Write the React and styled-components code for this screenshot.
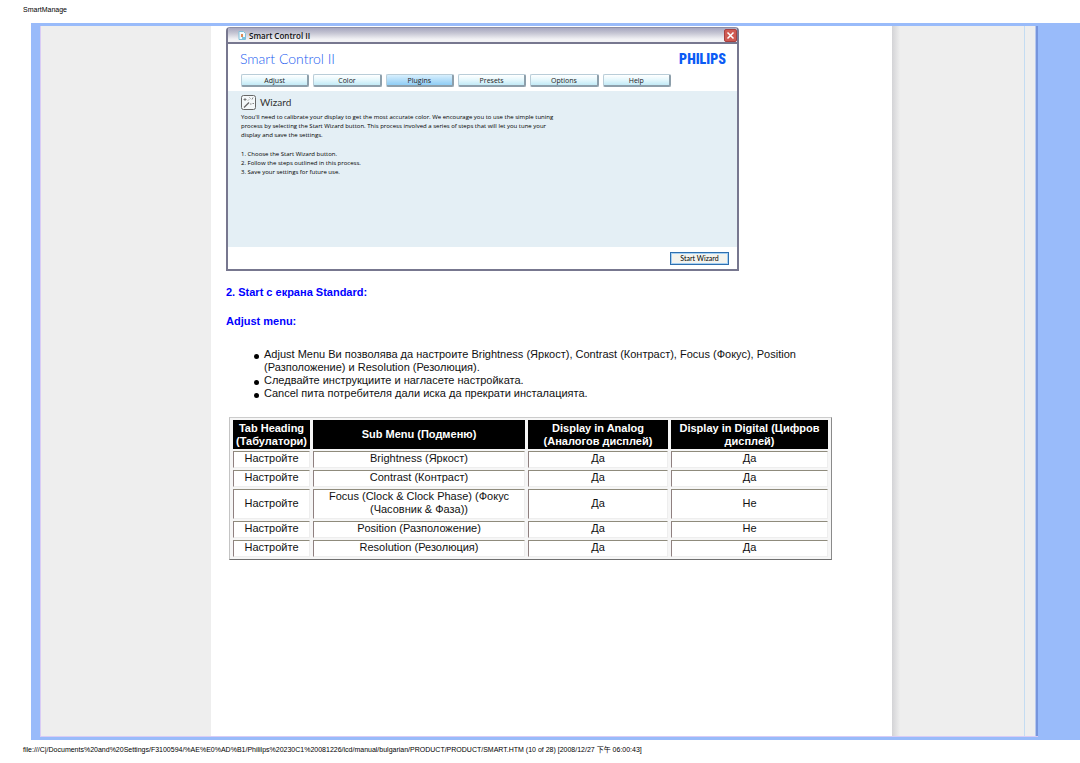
import React from "react";
import styled, { createGlobalStyle } from "styled-components";

const GlobalStyle = createGlobalStyle`
    body
    {
        margin: 0;
        background: #ffffff;
        color: #111111;
        font-family: "Liberation Sans", Arial, "Noto Sans CJK TC", sans-serif;
    }
`

const Page = styled.div`
    box-sizing: border-box;
    min-height: 100vh;
    display: flex;
    flex-direction: column;
`

const PrintLine = styled.div`
    box-sizing: border-box;
    height: 23px;
    padding: 4px 0 0 23px;
    font-size: 7px;
    line-height: 11px;
    white-space: nowrap;
    color: #000000;
`

const Frame = styled.div`
    box-sizing: border-box;
    flex: 1;
    display: flex;
    margin-left: 31px;
    border: solid #99bbfa;
    border-width: 3px 42px 3px 9px;
`

const Sheet = styled.div`
    flex: 1;
    display: flex;
    border: 1px solid #d9ccf5;
    border-width: 0 0 1px 1px;
`

const LeftMargin = styled.div`
    width: 170px;
    background: #eeeeee;
`

const RightMargin = styled.div`
    width: 132px;
    background: linear-gradient(to right, #d3d3d6 0px, #eeeeee 8px);
    border-right: 1px solid #c4dcf2;
`

const Edge = styled.div`
    width: 11px;
    background: #eeeeee;
    border-right: 2px solid #7795dc;
    box-shadow: inset -1px 0 0 #b7c8ee;
`

const Main = styled.main`
    flex: 1;
    box-sizing: border-box;
    padding: 1px 60px 0 15px;
`

const Window = styled.section`
    box-sizing: border-box;
    max-width: 513px;
    border: 2px solid #77778f;
    border-top: 1px solid #8e8ea4;
    border-radius: 4px 4px 0 0;
    background: #ffffff;
    overflow: hidden;
`

const TitleBar = styled.header`
    box-sizing: border-box;
    height: 16px;
    display: flex;
    align-items: center;
    gap: 3px;
    padding: 0 0 0 10px;
    background: linear-gradient(#a6a6bf, #c4c4d2 35%, #f2f2f5 80%);
    border-bottom: 2px solid #77778f;
    font-family: "Open Sans", sans-serif;
    font-size: 8px;
    font-weight: 600;
`

const CloseButton = styled.button`
    width: 13px;
    height: 13px;
    margin-left: auto;
    padding: 0;
    display: flex;
    align-items: center;
    justify-content: center;
    border: 1px solid #a84040;
    border-radius: 2px;
    background: #cf5a52;
`

const Brand = styled.div`
    display: flex;
    align-items: center;
    justify-content: space-between;
    height: 30px;
    padding: 0 11px 0 12px;
`

const AppName = styled.h1`
    margin: 0;
    font-family: Lato, sans-serif;
    font-size: 14px;
    font-weight: 300;
    line-height: 16px;
    color: #1a5cf0;
`

const Philips = styled.span`
    font-family: "Roboto Condensed", Roboto, sans-serif;
    font-size: 14px;
    font-weight: 900;
    line-height: 16px;
    color: #0b5bf5;
`

const Tabs = styled.nav`
    display: flex;
    gap: 4px;
    max-width: 430px;
    padding: 0 0 4px 13px;
`

const Tab = styled.button`
    flex: 1;
    height: 13px;
    padding: 0;
    border: 1px solid #b9cdd8;
    border-right: 2px solid #8d9fab;
    border-bottom: 2px solid #8d9fab;
    border-radius: 2px;
    background: ${({ $active }) => $active
        ? "linear-gradient(#d8effd, #8fcdf5)"
        : "linear-gradient(#ffffff, #e4f7fc 50%, #c2eaf6)"};
    color: #222222;
    font-family: "Open Sans", sans-serif;
    font-size: 7px;
    line-height: 11px;
`

const Wizard = styled.div`
    box-sizing: border-box;
    min-height: 156px;
    padding: 4px 13px;
    background: #e4eff5;
    font-family: "Open Sans", sans-serif;
    font-size: 6px;
    line-height: 9px;
    color: #000000;
`

const WizardTitle = styled.h2`
    display: flex;
    align-items: center;
    gap: 4px;
    height: 14px;
    margin: 0 0 4px;
    font-family: Lato, sans-serif;
    font-size: 10px;
    font-weight: 400;
    color: #333333;
`

const WizardText = styled.p`
    margin: 0 0 10px;
`

const WizardSteps = styled.ol`
    margin: 0;
    padding: 0;
    list-style-position: inside;
`

const WindowFooter = styled.footer`
    display: flex;
    justify-content: flex-end;
    padding: 5px 8px 4px 0;
`

const StartButton = styled.button`
    width: 59px;
    height: 13px;
    padding: 0;
    border: 1px solid #2f6fae;
    box-shadow: inset 0 0 0 1px #a5d0f3;
    background: #f3f3ee;
    font-family: Lato, sans-serif;
    font-size: 7px;
    line-height: 11px;
`

const Headings = styled.div`
    padding-top: 15px;
`

const Heading = styled.h3`
    margin: 0 0 16px;
    font-size: 11px;
    line-height: 13px;
    color: #0000ff;
`

const Notes = styled.ul`
    margin: 20px 0 17px;
    padding-left: 38px;
    list-style: none;
    font-size: 11px;
    line-height: 13px;
`

const Note = styled.li`
    position: relative;
    &::before
    {
        content: "";
        position: absolute;
        left: -10px;
        top: 6px;
        width: 5px;
        height: 5px;
        border-radius: 50%;
        background: #000000;
    }
`

const MenuTable = styled.table`
    width: 603px;
    margin-left: 3px;
    table-layout: fixed;
    border: 1px solid;
    border-color: #cccccc #8a8a8a #6f6f6f #c4c4c4;
    border-collapse: separate;
    border-spacing: 3px 2px;
    background: #f6f6f6;
    font-size: 11px;
    line-height: 13px;
    text-align: center;
`

const HeadCell = styled.th`
    box-sizing: border-box;
    padding: 0;
    height: 29px;
    background: #000000;
    color: #ffffff;
`

const Cell = styled.td`
    padding: 0 1px 2px;
    border: 1px solid;
    border-color: #8f8b7c #eeeeee #eeeeee #8f8080;
    background: #ffffff;
`

const tabs = ["Adjust", "Color", "Plugins", "Presets", "Options", "Help"];

const rows = [
    ["Настройте", "Brightness (Яркост)", "Да", "Да"],
    ["Настройте", "Contrast (Контраст)", "Да", "Да"],
    ["Настройте", "Focus (Clock & Clock Phase) (Фокус (Часовник & Фаза))", "Да", "Не"],
    ["Настройте", "Position (Разположение)", "Да", "Не"],
    ["Настройте", "Resolution (Резолюция)", "Да", "Да"],
];

const AppIcon = () => (
    <svg width="8" height="9" viewBox="0 0 8 9">
        <path d="M1 .5h4.500l2 2v6h-6.500z" fill="#f2fafd" stroke="#7fc0da" />
        <rect x="3" y="3" width="2" height="3" fill="#e08a55" />
        <rect x="4" y="6" width="3" height="2" fill="#7cc3df" />
    </svg>
)

const WandIcon = () => (
    <svg width="15" height="15" viewBox="0 0 15 15" fill="none" stroke="#666666">
        <rect x=".5" y=".5" width="14" height="14" rx="2" fill="#f4f8fa" />
        <path d="M3 12.500l5-5" strokeWidth="1.200" />
        <path d="M4 3v3M2.500 4.500h3M8.500 2.500l1 1M12 2.500l-1 2M9 9h1.500M11.500 8.500h1.500M7 5.500l1-1" strokeWidth=".8" />
    </svg>
)

const SmartControl = () => (
    <Window>
        <TitleBar>
            <AppIcon />
            Smart Control II
            <CloseButton aria-label="Close">
                <svg width="9" height="9" viewBox="0 0 9 9" stroke="#ffffff" strokeWidth="1.500">
                    <path d="M1.500 1.500l6 6M7.500 1.500l-6 6" />
                </svg>
            </CloseButton>
        </TitleBar>
        <Brand>
            <AppName>Smart Control II</AppName>
            <Philips>PHILIPS</Philips>
        </Brand>
        <Tabs>
            {tabs.map((tab) => <Tab key={tab} $active={tab === "Plugins"}>{tab}</Tab>)}
        </Tabs>
        <Wizard>
            <WizardTitle><WandIcon />Wizard</WizardTitle>
            <WizardText>
                Yoou'll need to calibrate your display to get the most accurate color. We encourage you to use the simple tuning<br />
                process by selecting the Start Wizard button. This process involved a series of steps that will let you tune your<br />
                display and save the settings.
            </WizardText>
            <WizardSteps>
                <li>Choose the Start Wizard button.</li>
                <li>Follow the steps outlined in this process.</li>
                <li>Save your settings for future use.</li>
            </WizardSteps>
        </Wizard>
        <WindowFooter>
            <StartButton>Start Wizard</StartButton>
        </WindowFooter>
    </Window>
)

const App = () =>
{
    return(
        <Page>
            <GlobalStyle />
            <PrintLine>SmartManage</PrintLine>
            <Frame>
                <Sheet>
                    <LeftMargin />
                    <Main>
                        <SmartControl />
                        <Headings>
                            <Heading>2. Start с екрана Standard:</Heading>
                            <Heading>Adjust menu:</Heading>
                        </Headings>
                        <Notes>
                            <Note>Adjust Menu Ви позволява да настроите Brightness (Яркост), Contrast (Контраст), Focus (Фокус), Position (Разположение) и Resolution (Резолюция).</Note>
                            <Note>Следвайте инструкциите и нагласете настройката.</Note>
                            <Note>Cancel пита потребителя дали иска да прекрати инсталацията.</Note>
                        </Notes>
                        <MenuTable>
                            <colgroup>
                                <col width="77" />
                                <col width="212" />
                                <col width="140" />
                                <col />
                            </colgroup>
                            <thead>
                                <tr>
                                    <HeadCell>Tab Heading (Табулатори)</HeadCell>
                                    <HeadCell>Sub Menu (Подменю)</HeadCell>
                                    <HeadCell>Display in Analog (Аналогов дисплей)</HeadCell>
                                    <HeadCell>Display in Digital (Цифров дисплей)</HeadCell>
                                </tr>
                            </thead>
                            <tbody>
                                {rows.map((row) => (
                                    <tr key={row[1]}>
                                        {row.map((text, i) => <Cell key={i}>{text}</Cell>)}
                                    </tr>
                                ))}
                            </tbody>
                        </MenuTable>
                    </Main>
                    <RightMargin />
                    <Edge />
                </Sheet>
            </Frame>
            <PrintLine as="footer">file:///C|/Documents%20and%20Settings/F3100594/%AE%E0%AD%B1/Phililps%20230C1%20081226/lcd/manual/bulgarian/PRODUCT/PRODUCT/SMART.HTM (10 of 28) [2008/12/27 下午 06:00:43]</PrintLine>
        </Page>
    )
}

export default App;
